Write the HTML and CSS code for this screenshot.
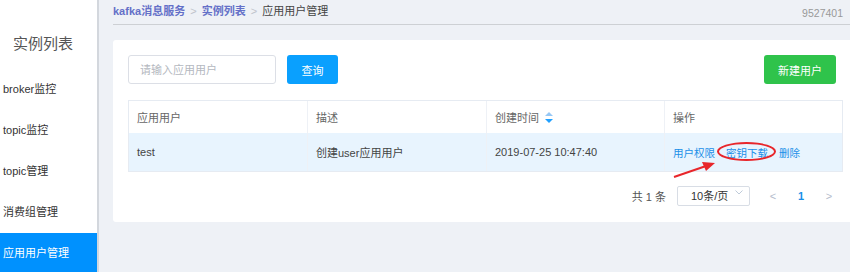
FILE: index.html
```html
<!DOCTYPE html>
<html lang="zh-CN">
<head>
    <meta charset="UTF-8">
    <title>应用用户管理</title>
    <link rel="stylesheet" href="styles.css">
</head>
<body>

<div class="sidebar">
    <div class="sidebar-title">实例列表</div>
    <div class="menu-item">broker监控</div>
    <div class="menu-item">topic监控</div>
    <div class="menu-item">topic管理</div>
    <div class="menu-item">消费组管理</div>
    <div class="menu-item active">应用用户管理</div>
</div>

<div class="main">
    <div class="topbar">
        <div class="crumbs">
            <span class="crumb-link">kafka消息服务</span>
            <span class="crumb-sep">&gt;</span>
            <span class="crumb-link">实例列表</span>
            <span class="crumb-sep">&gt;</span>
            <span class="crumb-current">应用用户管理</span>
        </div>
        <div class="user-id">9527401</div>
    </div>

    <div class="card">
        <div class="toolbar">
            <div class="search">
                <input class="search-input" type="text" placeholder="请输入应用用户">
                <button class="btn btn-blue">查询</button>
            </div>
            <button class="btn btn-green">新建用户</button>
        </div>

        <div class="table">
            <div class="row head">
                <div class="cell">应用用户</div>
                <div class="cell">描述</div>
                <div class="cell">创建时间
                    <svg class="sort-icon" width="8" height="11" viewBox="0 0 8 11">
                        <path d="M4 0 L8 4 L0 4 Z" fill="#97c8f5"/>
                        <path d="M4 11 L8 7 L0 7 Z" fill="#20a0ff"/>
                    </svg>
                </div>
                <div class="cell">操作</div>
            </div>
            <div class="row body">
                <div class="cell">test</div>
                <div class="cell">创建user应用用户</div>
                <div class="cell">2019-07-25 10:47:40</div>
                <div class="cell actions">
                    <a class="link">用户权限</a>
                    <a class="link marked">密钥下载<span class="ring"></span></a>
                    <a class="link">删除</a>
                    <svg class="arrow" width="46" height="20" viewBox="0 0 46 20">
                        <path d="M1 17 L33 6" stroke="#e8262b" stroke-width="2" fill="none"/>
                        <path d="M42 3 L29 2 L33 11 Z" fill="#e8262b"/>
                    </svg>
                </div>
            </div>
        </div>

        <div class="pager">
            <span class="total">共 1 条</span>
            <div class="size-select">
                <span>10条/页</span>
                <svg class="caret" width="8" height="5" viewBox="0 0 8 5">
                    <path d="M0.5 0.5 L4 4 L7.5 0.5" stroke="#bfcbd9" fill="none"/>
                </svg>
            </div>
            <span class="page-arrow">&lt;</span>
            <span class="page-num">1</span>
            <span class="page-arrow">&gt;</span>
        </div>
    </div>
</div>

</body>
</html>
```

FILE: styles.css
```css
body {
    margin: 0;
    height: 272px;
    overflow: hidden;
    display: flex;
    font-family: "Liberation Sans", "Noto Sans CJK SC", sans-serif;
    font-size: 11px;
    color: #333;
    background-color: #eef1f6;
}
.sidebar {
    width: 97px;
    flex-shrink: 0;
    background-color: #fff;
    border-right: 2px solid #d3d7dd;
}
.sidebar-title {
    padding: 34px 0 0 13px;
    height: 35px;
    line-height: 20px;
    font-size: 15px;
    color: #555;
}
.menu-item {
    height: 41px;
    line-height: 41px;
    padding-left: 3px;
    color: #333;
}
.menu-item.active {
    background-color: #0091fe;
    color: #fff;
}
.main {
    flex: 1;
    padding-left: 14px;
}
.topbar {
    height: 24px;
    border-bottom: 1px solid #cdd0d4;
    display: flex;
    justify-content: space-between;
    align-items: center;
}
.crumbs {
    margin-top: -4px;
}
.crumb-link {
    color: #6470c8;
    font-weight: bold;
}
.crumb-sep {
    color: #c0c4cc;
    margin: 0 2px;
}
.crumb-current {
    color: #444;
}
.user-id {
    color: #999;
    font-size: 10.5px;
    margin-right: 7px;
    margin-top: 2px;
}
.card {
    margin-top: 15px;
    background-color: #fff;
    padding: 15px 7px 16px 15px;
    border-radius: 3px 0 0 3px;
}
.toolbar {
    display: flex;
    justify-content: space-between;
    margin-right: 7px;
}
.search {
    display: flex;
    gap: 11px;
}
.search-input {
    width: 148px;
    height: 29px;
    box-sizing: border-box;
    border: 1px solid #dcdfe6;
    border-radius: 3px;
    padding: 0 11px;
    font-family: inherit;
    font-size: 11px;
    outline: none;
}
.search-input::placeholder {
    color: #b4b8c0;
}
.btn {
    height: 29px;
    border: none;
    border-radius: 3px;
    color: #fff;
    font-family: inherit;
    font-size: 11px;
}
.btn-blue {
    width: 51px;
    background-color: #0aa0fe;
}
.btn-green {
    width: 72px;
    background-color: #2fc34b;
}
.table {
    margin-top: 16px;
    border: 1px solid #e6ebf2;
    width: 715px;
    box-sizing: border-box;
}
.row {
    display: grid;
    grid-template-columns: 178px 179px 178px 1fr;
}
.row.head {
    height: 32px;
    color: #666;
}
.row.body {
    height: 38px;
    background-color: #e8f4fe;
    color: #444;
}
.cell {
    display: flex;
    align-items: center;
    padding-left: 8px;
    border-left: 1px solid #eef1f6;
}
.cell:first-child {
    border-left: none;
}
.sort-icon {
    margin-left: 6px;
}
.actions {
    position: relative;
    gap: 11px;
}
.link {
    color: #1a8fe8;
    font-size: 10.5px;
    position: relative;
}
.ring {
    position: absolute;
    left: -9px;
    top: -3px;
    width: 59px;
    height: 19px;
    box-sizing: border-box;
    border: 2px solid #e8262b;
    border-radius: 50%;
}
.arrow {
    position: absolute;
    left: 8px;
    top: 27px;
}
.pager {
    display: flex;
    align-items: center;
    justify-content: flex-end;
    margin-top: 14px;
    height: 20px;
    color: #555;
}
.total {
    margin-right: 11px;
}
.size-select {
    position: relative;
    width: 73px;
    height: 20px;
    box-sizing: border-box;
    border: 1px solid #d8dde5;
    border-radius: 2px;
    padding-left: 13px;
    line-height: 19px;
    color: #333;
    margin-right: 9px;
}
.caret {
    position: absolute;
    right: 6px;
    top: 3px;
}
.page-arrow {
    color: #b4bccc;
    width: 28px;
    text-align: center;
}
.page-num {
    color: #1a8fe8;
    font-weight: bold;
    width: 28px;
    text-align: center;
}
```
